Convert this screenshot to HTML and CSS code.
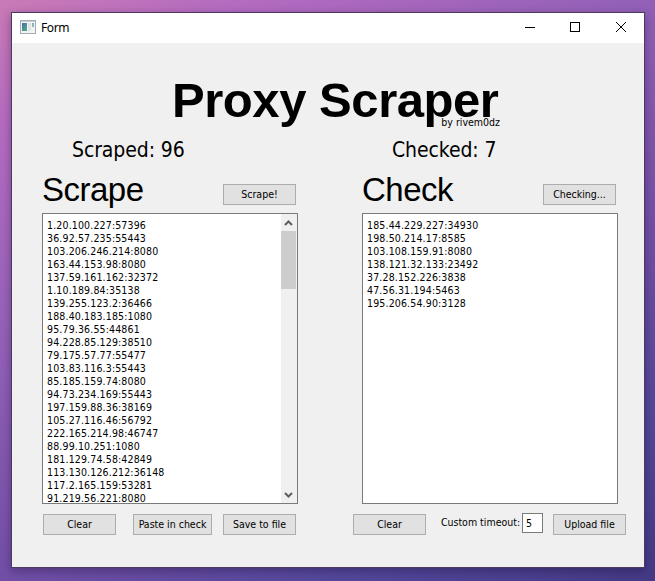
FILE: index.html
```html
<!DOCTYPE html>
<html lang="en">
<head>
<meta charset="utf-8">
<title>Form</title>
<link rel="stylesheet" href="styles.css">
</head>
<body>
<main class="window">
  <header class="titlebar">
    <svg class="app-icon" width="16" height="14" viewBox="0 0 16 14">
      <defs><linearGradient id="g" x1="0" y1="0" x2="1" y2="1"><stop offset="0" stop-color="#3d6fae"/><stop offset="1" stop-color="#59b07c"/></linearGradient></defs>
      <rect x=".5" y=".5" width="15" height="13" fill="#f2f3f4" stroke="#a6adb2"/>
      <path d="M1 1.5h14" stroke="#c9cfd3"/>
      <rect x="2" y="3" width="5" height="8" fill="url(#g)"/>
      <rect x="8" y="3" width="3" height="8" fill="#e2e3e4"/>
      <rect x="12" y="3" width="2" height="4" fill="url(#g)" opacity=".6"/>
    </svg>
    <span class="caption">Form</span>
    <svg class="controls" width="102" height="12" viewBox="0 0 102 12" fill="none" stroke="#000">
      <path d="M0 6.5h10" shape-rendering="crispEdges"/>
      <rect x="45.5" y="1.5" width="9" height="9" shape-rendering="crispEdges"/>
      <path d="M91 1l10 10M101 1l-10 10"/>
    </svg>
  </header>
  <h1 class="title">Proxy Scraper</h1>
  <p class="author">by rivem0dz</p>
  <div class="panels">
    <section class="panel">
      <p class="count count-scraped">Scraped: 96</p>
      <div class="panel-head"><h2>Scrape</h2><button class="btn">Scrape!</button></div>
      <div class="list">
        <div class="rows">1.20.100.227:57396
36.92.57.235:55443
103.206.246.214:8080
163.44.153.98:8080
137.59.161.162:32372
1.10.189.84:35138
139.255.123.2:36466
188.40.183.185:1080
95.79.36.55:44861
94.228.85.129:38510
79.175.57.77:55477
103.83.116.3:55443
85.185.159.74:8080
94.73.234.169:55443
197.159.88.36:38169
105.27.116.46:56792
222.165.214.98:46747
88.99.10.251:1080
181.129.74.58:42849
113.130.126.212:36148
117.2.165.159:53281
91.219.56.221:8080</div>
        <div class="scrollbar">
          <svg class="arrow" width="16" height="17" viewBox="0 0 16 17"><path d="M4 11l3.5-3.5 3.5 3.5"/></svg>
          <div class="thumb"></div>
          <svg class="arrow" width="16" height="17" viewBox="0 0 16 17"><path d="M4 7l3.5 3.5 3.5-3.5"/></svg>
        </div>
      </div>
      <div class="actions">
        <button class="btn">Clear</button>
        <button class="btn btn-wide">Paste in check</button>
        <button class="btn btn-save">Save to file</button>
      </div>
    </section>
    <section class="panel">
      <p class="count count-checked">Checked: 7</p>
      <div class="panel-head"><h2>Check</h2><button class="btn btn-checking">Checking...</button></div>
      <div class="list">
        <div class="rows">185.44.229.227:34930
198.50.214.17:8585
103.108.159.91:8080
138.121.32.133:23492
37.28.152.226:3838
47.56.31.194:5463
195.206.54.90:3128</div>
      </div>
      <div class="actions actions-check">
        <button class="btn">Clear</button>
        <label class="timeout"><span>Custom timeout:</span><span class="field">5</span></label>
        <button class="btn">Upload file</button>
      </div>
    </section>
  </div>
</main>
</body>
</html>
```
FILE: styles.css
```css
* { box-sizing: border-box; }
body {
  margin: 0;
  width: 655px;
  height: 581px;
  padding: 12px 10px 13px 11px;
  overflow: hidden;
  background: linear-gradient(152deg, #c97ab6 0%, #b46bc0 14%, #9461b8 36%, #7550a8 60%, #53479b 82%, #443a86 100%);
  color: #000;
  font: 10.5px/13px "DejaVu Sans Condensed", "DejaVu Sans", sans-serif;
  font-stretch: condensed;
}
h1, h2, p { margin: 0; font-weight: 400; }
.window {
  width: 634px;
  height: 556px;
  border: 1px solid #4c3a5c;
  background: #f0f0f0;
  box-shadow: 0 3px 9px rgba(20, 5, 40, .35);
}
.titlebar {
  display: flex;
  align-items: center;
  height: 30px;
  padding: 0 17px 2px 8px;
  background: #fff;
}
.caption {
  margin: 1px 0 0 5px;
  font: 12px/16px "Noto Sans", sans-serif;
  letter-spacing: -.4px;
}
.controls { margin-left: auto; }
.title {
  height: 54px;
  margin: 29px 0 0 160px;
  font: bold 49px/56px "Liberation Sans", sans-serif;
  letter-spacing: -.45px;
}
.author {
  width: 488px;
  margin-top: -10px;
  text-align: right;
}
.panels { display: flex; gap: 64px; padding: 7px 0 0 30px; }
.panel { width: 256px; }
.count {
  height: 27px;
  padding-left: 30px;
  font-size: 21px;
  line-height: 28px;
  letter-spacing: -.1px;
  white-space: nowrap;
}
.panel-head {
  display: flex;
  align-items: flex-start;
  justify-content: space-between;
  height: 50px;
  padding: 21px 2px 0 0;
}
.panel-head h2 {
  margin-top: -15px;
  font: 33px/42px "Liberation Sans", sans-serif;
  letter-spacing: -.5px;
}
.btn {
  width: 73px;
  height: 21px;
  padding: 0;
  border: 1px solid #adadad;
  background: #e1e1e1;
  color: #000;
  font: inherit;
  white-space: nowrap;
}
.btn-wide { width: 79px; }
.list {
  display: flex;
  justify-content: space-between;
  height: 291px;
  border: 1px solid #7a7a7a;
  background: #fff;
  overflow: hidden;
}
.rows { padding: 5px 0 0 4px; white-space: pre; letter-spacing: .15px; }
.scrollbar {
  display: flex;
  flex-direction: column;
  width: 16px;
  background: #f0f0f0;
}
.arrow { fill: none; stroke: #606060; stroke-width: 2; }
.thumb { width: 15px; height: 58px; margin-bottom: auto; background: #cdcdcd; }
.actions {
  display: flex;
  justify-content: space-between;
  padding: 10px 2px 0 1px;
}
.actions .btn-wide { margin-left: 6px; }
.actions-check { width: 273px; margin-left: -9px; padding: 10px 0 0; }
.timeout { display: flex; margin: -1px -5px 0 0; line-height: 19px; }
.field {
  width: 21px;
  height: 20px;
  margin-left: 2px;
  padding-left: 3px;
  border: 1px solid #7a7a7a;
  background: #fff;
}
```
